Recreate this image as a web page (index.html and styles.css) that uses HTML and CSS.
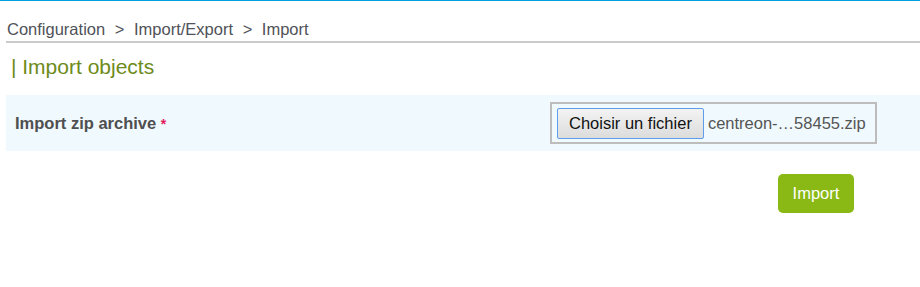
FILE: index.html
```html
<!DOCTYPE html>
<html lang="fr">

<head>
    <meta charset="UTF-8">
    <title>Import</title>
    <link rel="stylesheet" href="styles.css">
</head>

<body>

    <!-- Fil d'ariane -->
    <div class="breadcrumb">
        <span>Configuration</span>
        <span class="sep">&gt;</span>
        <span>Import/Export</span>
        <span class="sep">&gt;</span>
        <span>Import</span>
    </div>

    <h3 class="page-title">| Import objects</h3>

    <!-- Formulaire -->
    <form class="form-table">
        <div class="row">
            <label class="field-label">Import zip archive <span class="required">*</span></label>
            <div class="file-box">
                <span class="file-btn">Choisir un fichier</span>
                <span class="file-name">centreon-…58455.zip</span>
            </div>
        </div>
        <div class="actions">
            <button type="button" class="btc">Import</button>
        </div>
    </form>

</body>

</html>
```

FILE: styles.css
```css
body {
    margin: 0;
    font-family: "Liberation Sans", Arial, sans-serif;
    color: #555;
    background: #fff;
    border-top: 1px solid #009fdf;
}

.breadcrumb {
    margin: 0 0 0 6px;
    padding: 19px 0 2px 1px;
    font-size: 16.5px;
    color: #4f5258;
    border-bottom: 2px solid #cbcbcb;
}

.breadcrumb .sep {
    margin: 0 5px;
}

.page-title {
    margin: 0;
    padding: 12px 0 0 11px;
    font-size: 21px;
    font-weight: normal;
    color: #6d8b1a;
}

.form-table {
    margin: 16px 0 0 6px;
}

.row {
    display: flex;
    align-items: center;
    justify-content: space-between;
    background: #eff9fe;
    height: 56px;
    padding: 0 43px 0 9px;
}

.field-label {
    font-size: 16.5px;
    font-weight: bold;
    color: #4f4f4f;
}

.required {
    color: #e0195c;
    font-size: 14px;
}

.file-box {
    display: flex;
    align-items: center;
    width: 327px;
    height: 42px;
    border: 2px solid #bdbdbd;
    padding: 0 0 0 5px;
    box-sizing: border-box;
}

.file-btn {
    display: inline-block;
    padding: 5px 11px;
    font-size: 16.5px;
    color: #111;
    background: linear-gradient(#f3f3f3, #dcdcdc);
    border: 1px solid #5e9cec;
    border-radius: 2px;
}

.file-name {
    margin-left: 4px;
    font-size: 16.5px;
    color: #555;
}

.actions {
    display: flex;
    justify-content: flex-end;
    padding: 23px 66px 0 0;
}

.btc {
    width: 76px;
    height: 39px;
    background: #8ab916;
    color: #fff;
    border: none;
    border-radius: 5px;
    font-family: "Liberation Sans", Arial, sans-serif;
    font-size: 16.5px;
}
```
